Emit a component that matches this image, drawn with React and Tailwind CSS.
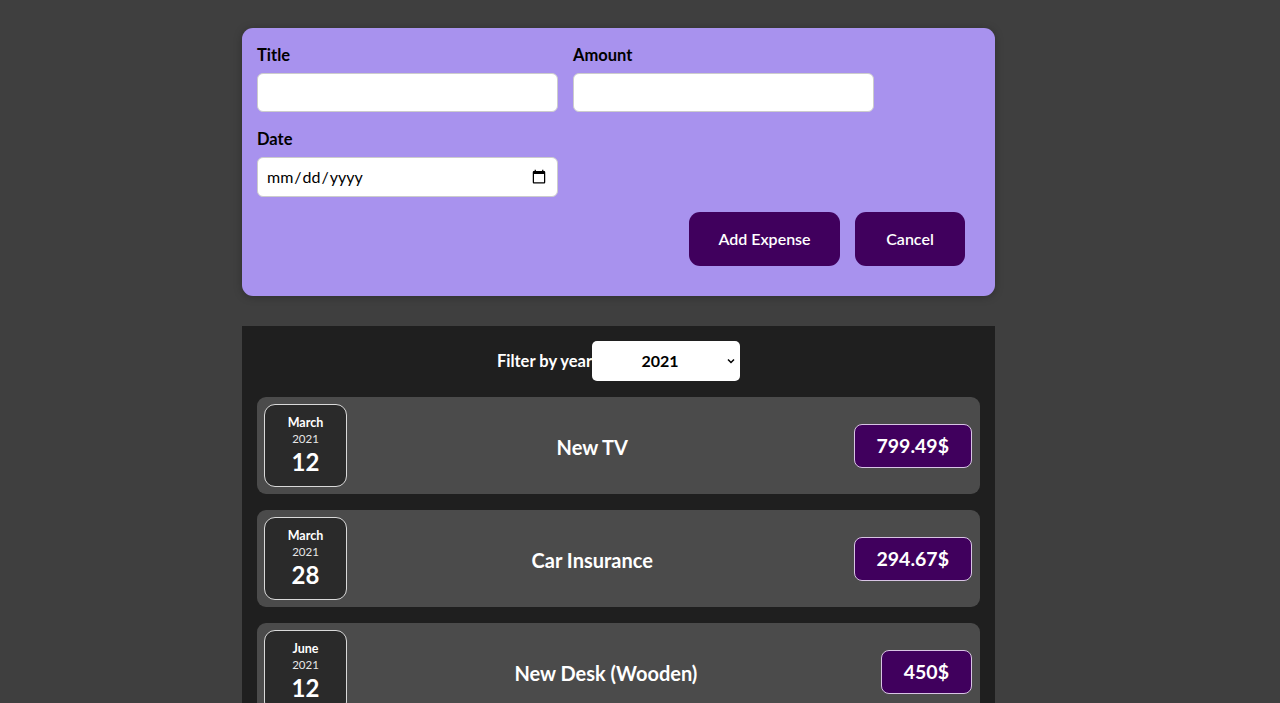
import React from "react";

const items = [
  { month: "March", year: "2021", day: "12", title: "New TV", amount: "799.49$" },
  { month: "March", year: "2021", day: "28", title: "Car Insurance", amount: "294.67$" },
  { month: "June", year: "2021", day: "12", title: "New Desk (Wooden)", amount: "450$" },
];

function ExpenseItem({ month, year, day, title, amount }) {
  return (
    <div className="flex items-center bg-[#4b4b4b] rounded-[9px] p-[7px] pr-[8px] mb-[16px]">
      <div className="w-[83px] h-[83px] shrink-0 flex flex-col items-center justify-center bg-[#2a2a2a] border border-[#d9d9d9] rounded-[11px] text-white">
        <div className="text-[12.5px] font-bold leading-[16px]">{month}</div>
        <div className="text-[11.5px] leading-[16px] text-[#e6e6e6]">{year}</div>
        <div className="text-[24px] font-bold leading-[29px]">{day}</div>
      </div>
      <div className="flex-1 text-center text-white text-[20px] font-bold mr-[16px] pt-[3px]">{title}</div>
      <div className="h-[44px] px-[22px] flex items-center bg-[#40005d] border border-[#d8c4e4] rounded-[8px] text-white text-[19.5px] font-bold">
        {amount}
      </div>
    </div>
  );
}

export default function App() {
  return (
    <div
      className="min-h-[703px] bg-[#3f3f3f] pt-[28px] overflow-hidden"
      style={{ fontFamily: "Lato, 'Open Sans', sans-serif" }}
    >
      <div className="ml-[242px] w-[753px] bg-[#a892ee] rounded-[11px] p-[15px] pb-[30px] shadow-[0_1px_8px_rgba(0,0,0,0.25)]">
        <div className="flex flex-wrap gap-[15px]">
          <div className="flex flex-col">
            <label className="text-[16.5px] font-bold leading-[22px] pt-[1px] mb-[7px] text-black">Title</label>
            <input type="text" className="w-[301px] h-[39px] bg-white rounded-[6px] border border-[#ccc] px-[8px] text-[15px] outline-none" />
          </div>
          <div className="flex flex-col">
            <label className="text-[16.5px] font-bold leading-[22px] pt-[1px] mb-[7px] text-black">Amount</label>
            <input type="number" className="w-[301px] h-[39px] bg-white rounded-[6px] border border-[#ccc] px-[8px] text-[15px] outline-none" />
          </div>
          <div className="flex flex-col w-full">
            <label className="text-[16.5px] font-bold leading-[22px] pt-[1px] mb-[7px] text-black">Date</label>
            <input
              type="date"
              className="w-[301px] h-[40px] bg-white rounded-[6px] border border-[#ccc] px-[8px] text-[16px] text-black outline-none"
              style={{ fontFamily: "Lato, 'Open Sans', sans-serif" }}
            />
          </div>
        </div>
        <div className="flex justify-end gap-[15px] mt-[15px] pr-[15px]">
          <button className="w-[151px] h-[54px] bg-[#40005d] text-white text-[16px] font-semibold rounded-[11px]">Add Expense</button>
          <button className="w-[110px] h-[54px] bg-[#40005d] text-white text-[16px] font-semibold rounded-[11px]">Cancel</button>
        </div>
      </div>

      <div className="ml-[242px] mt-[30px] w-[753px] bg-[#1f1f1f] p-[15px]">
        <div className="flex items-center justify-center mb-[16px]">
          <span className="text-white text-[16.5px] font-bold">Filter by year</span>
          <div className="relative w-[148px] h-[40px] bg-white rounded-[5px] flex items-center justify-center pr-[12px]">
            <span className="text-[16px] font-bold text-black">2021</span>
            <svg className="absolute right-[4px] top-[15px]" width="10" height="10" viewBox="0 0 10 10">
              <path d="M2 3.5 L5 6.5 L8 3.5" fill="none" stroke="#000" strokeWidth="1.5" />
            </svg>
          </div>
        </div>
        {items.map((it, i) => (
          <ExpenseItem key={i} {...it} />
        ))}
      </div>
    </div>
  );
}
